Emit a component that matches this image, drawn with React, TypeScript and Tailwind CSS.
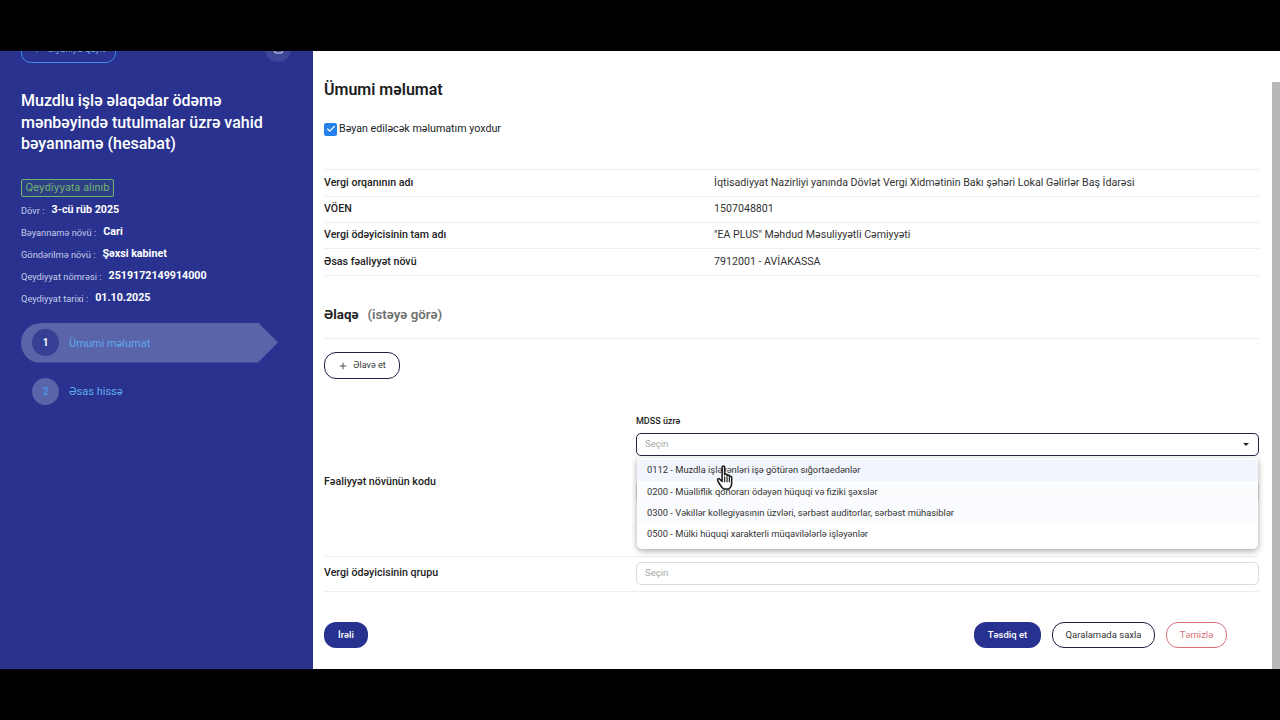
import { ArrowLeft, Check, Plus, Trash2 } from "lucide-react";

const meta = [
  ["Dövr :", "3-cü rüb 2025"],
  ["Bəyannamə növü :", "Cari"],
  ["Göndərilmə növü :", "Şəxsi kabinet"],
  ["Qeydiyyat nömrəsi :", "2519172149914000"],
  ["Qeydiyyat tarixi :", "01.10.2025"],
];

const info = [
  ["Vergi orqanının adı", "İqtisadiyyat Nazirliyi yanında Dövlət Vergi Xidmətinin Bakı şəhəri Lokal Gəlirlər Baş İdarəsi", "h-[27px]"],
  ["VÖEN", "1507048801", "h-[26px] pb-[2px]"],
  ["Vergi ödəyicisinin tam adı", '"EA PLUS" Məhdud Məsuliyyətli Cəmiyyəti', "h-[26px] pb-[2px]"],
  ["Əsas fəaliyyət növü", "7912001 - AVİAKASSA", "h-[27px]"],
];

const options = [
  ["0112 - Muzdla işləyənləri işə götürən sığortaedənlər", "h-[22px] bg-[#f2f5fb]"],
  ["0200 - Müəlliflik qonorarı ödəyən hüquqi və fiziki şəxslər", "h-[22px] bg-[#fbfcfe]"],
  ["0300 - Vəkillər kollegiyasının üzvləri, sərbəst auditorlar, sərbəst mühasiblər", "h-[21px] bg-[#fafbfe]"],
  ["0500 - Mülki hüquqi xarakterli müqavilələrlə işləyənlər", "h-[21px] bg-white"],
];

function HandCursor() {
  return (
    <svg className="absolute top-[465px] left-[716px]" width="19" height="25" viewBox="0 0 19 26">
      <path
        d="M6 2.2c0-1.600 2.600-1.600 2.600 0v8c0-1.200 2.500-1.200 2.500 0v1c0-1.200 2.400-1.200 2.400.2v1c0-1.100 2.400-1 2.400.4v5.400c0 3.400-1.800 6-3.200 6.800H7.600C6 24 2.600 19 1.400 16.200c-.7-1.700.9-2.800 2-1.600L6 17.200Z"
        fill="#fff"
        stroke="#1a1a1a"
        strokeWidth="1.600"
        strokeLinejoin="round"
      />
      <path d="M8.600 12v6M11.100 12v6M13.500 13v5" stroke="#1a1a1a" strokeWidth="1.200" fill="none" />
    </svg>
  );
}

function Sidebar() {
  return (
    <aside className="w-[313px] shrink-0 overflow-hidden bg-[#29338f] pl-[21px] text-white">
      <div className="-mt-[16px] flex items-center justify-between pr-[22px]">
        <button className="flex h-[28px] w-[95px] items-center justify-center gap-[6px] rounded-[10px] border border-[#3f8fe8] text-[9.500px] text-[#7ab8f2]">
          <ArrowLeft size={10} />
          Siyahıya qayıt
        </button>
        <div className="flex size-[26px] items-center justify-center rounded-full bg-[#3d4699]">
          <Trash2 size={13} className="mb-[3px] text-[#d5d8ee]" />
        </div>
      </div>

      <h1 className="mt-[27px] w-[270px] text-[16px] leading-[21.500px] font-medium">
        Muzdlu işlə əlaqədar ödəmə mənbəyində tutulmalar üzrə vahid bəyannamə (hesabat)
      </h1>

      <div className="mt-[24px] flex h-[18px] w-[93px] items-center justify-center rounded-[2px] border border-[#6db56d] bg-[#2f3f85] font-['Inter',sans-serif] text-[10px] tracking-[0.2px] text-[#71b96e]">
        Qeydiyyata alınıb
      </div>

      <div className="mt-[3px]">
        {meta.map(([label, value]) => (
          <div key={label} className="flex h-[22px] items-center gap-[7px]">
            <span className="text-[9.300px] text-[#c5cbe8]">{label}</span>
            <span className="text-[10.700px] font-bold">{value}</span>
          </div>
        ))}
      </div>

      <div className="mt-[13px] flex h-[40px] w-[257px] items-center gap-[10px] rounded-l-[20px] bg-[#5a64a8] pl-[11px] [clip-path:polygon(0_0,237px_0,257px_50%,237px_100%,0_100%)]">
        <div className="flex size-[27px] items-center justify-center rounded-full bg-[#353f93] text-[10px] font-bold">1</div>
        <span className="pt-[3px] text-[11px] text-[#5fabec]">Ümumi məlumat</span>
      </div>

      <div className="mt-[9px] flex h-[40px] items-center gap-[10px] pl-[11px]">
        <div className="flex size-[27px] items-center justify-center rounded-full bg-[#5a64a8] text-[10px] font-bold text-[#4a90e0]">2</div>
        <span className="pt-px text-[11px] text-[#5fabec]">Əsas hissə</span>
      </div>
    </aside>
  );
}

function SelectBox({ dark }: { dark?: boolean }) {
  return (
    <div
      className={`flex h-[23px] items-center justify-between rounded-[5px] border bg-white pr-[8px] pl-[8px] text-[9.500px] text-[#a8a8a8] ${
        dark ? "border-[#23253f]" : "border-[#dcdcdc]"
      }`}
    >
      Seçin
      {dark && <span className="mr-px h-0 w-0 border-x-[3px] border-t-[3px] border-x-transparent border-t-[#222]" />}
    </div>
  );
}

export default function App() {
  return (
    <div className="relative flex h-[720px] w-[1280px] flex-col overflow-hidden bg-black font-['Roboto',sans-serif] text-[#212529]">
      <div className="h-[51px] shrink-0 bg-black" />

      <div className="flex h-[618px] shrink-0">
        <Sidebar />

        <main className="flex flex-1 bg-white">
          <div className="w-[959px] shrink-0 pl-[11px]">
            <div className="w-[935px]">
              <h2 className="mt-[29px] h-[20px] text-[16px] leading-[20px] font-semibold text-[#1c1c1c]">Ümumi məlumat</h2>

              <label className="mt-[22px] flex h-[14px] items-center gap-[2px] text-[10.700px]">
                <span className="flex size-[13px] items-center justify-center rounded-[2px] bg-[#2680eb]">
                  <Check size={10} strokeWidth={3} className="text-white" />
                </span>
                Bəyan ediləcək məlumatım yoxdur
              </label>

              <div className="mt-[33px] border-t border-[#eeeeee]">
                {info.map(([label, value, height]) => (
                  <div key={label} className={`grid grid-cols-[390px_1fr] items-center border-b border-[#eeeeee] text-[10.650px] ${height}`}>
                    <span className="font-medium text-[#222]">{label}</span>
                    <span className="text-[#333]">{value}</span>
                  </div>
                ))}
              </div>

              <h3 className="mt-[29px] flex h-[20px] items-center gap-[9px] text-[13.300px] font-bold text-[#222]">
                Əlaqə
                <span className="font-semibold text-[#6f6f6f]">(istəyə görə)</span>
              </h3>

              <div className="mt-[13px] border-t border-[#eeeeee]" />

              <button className="mt-[13px] flex h-[27px] w-[76px] items-center justify-center gap-[5px] rounded-[12px] border border-[#1d1f45] text-[9px] text-[#333]">
                <Plus size={10} />
                Əlavə et
              </button>

              <div className="mt-[32px] grid h-[146px] grid-cols-[312px_1fr] items-center border-b border-[#eeeeee]">
                <span className="pb-[4px] text-[10.650px] font-medium text-[#222]">Fəaliyyət növünün kodu</span>
                <div className="self-start pt-[3px]">
                  <div className="h-[14px] text-[9px] leading-[14px] font-medium text-[#222]">MDSS üzrə</div>
                  <div className="mt-[5px]">
                    <SelectBox dark />
                  </div>
                  {/* second field, covered by the open dropdown */}
                  <div className="mt-[24px] h-[23px] rounded-[5px] border border-[#dcdcdc]" />
                </div>
              </div>

              <div className="grid h-[35px] grid-cols-[312px_1fr] items-center border-b border-[#eeeeee] pb-[2px]">
                <span className="pb-px text-[10.650px] font-medium text-[#222]">Vergi ödəyicisinin qrupu</span>
                <SelectBox />
              </div>

              <div className="mt-[30px] flex items-center">
                <button className="h-[26px] w-[44px] rounded-[12px] bg-[#27318f] text-[9.500px] font-medium text-white">İrəli</button>
                <button className="ml-auto h-[26px] w-[67px] rounded-[12px] bg-[#27318f] text-[9.500px] font-medium text-white">Təsdiq et</button>
                <button className="ml-[11px] h-[26px] w-[103px] rounded-[12px] border border-[#1d1f45] text-[9.500px] text-[#333]">Qaralamada saxla</button>
                <button className="mr-[32px] ml-[11px] h-[26px] w-[61px] rounded-[12px] border border-[#d9707c] text-[9.500px] text-[#d9707c]">Təmizlə</button>
              </div>
            </div>
          </div>

          <div className="mt-[31px] w-[8px] bg-[#b8b8b8]" />
        </main>
      </div>

      <div className="flex-1 bg-black" />

      {/* open dropdown of the MDSS select */}
      <div className="absolute top-[458px] left-[637px] h-[91px] w-[621px] rounded-b-[5px] bg-white pt-px text-[9.350px] text-[#333] shadow-[0_2px_6px_rgba(0,0,0,0.35)]">
        {options.map(([text, cls]) => (
          <div key={text} className={`flex items-center pl-[10px] ${cls}`}>
            {text}
          </div>
        ))}
      </div>

      <HandCursor />
    </div>
  );
}
